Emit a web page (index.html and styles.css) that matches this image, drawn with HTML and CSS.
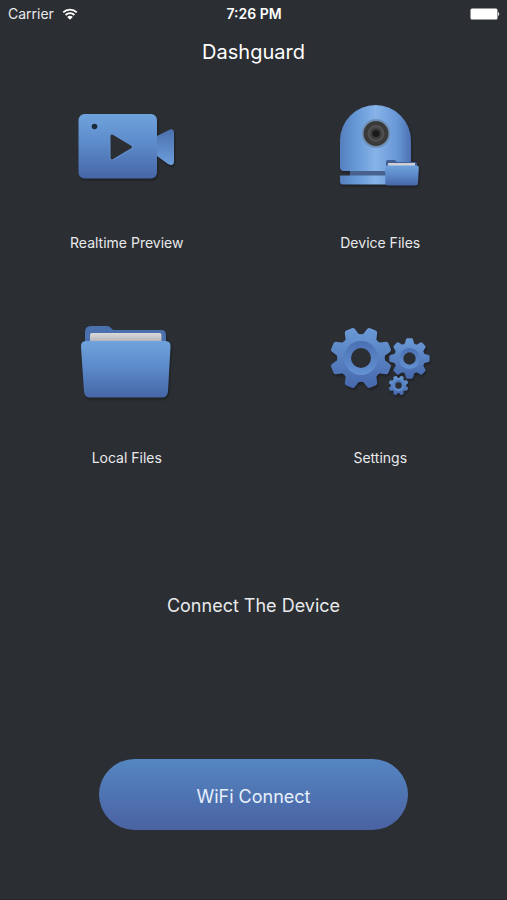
FILE: index.html
```html
<!DOCTYPE html>
<html lang="en">
<head>
    <meta charset="UTF-8">
    <meta name="viewport" content="width=device-width, initial-scale=1.0">
    <title>Dashguard</title>
    <link rel="stylesheet" href="styles.css">
</head>
<body>
    <!-- Status bar -->
    <div class="status-bar">
        <div class="carrier">
            <span>Carrier</span>
            <svg class="wifi" viewBox="0 0 16 12" aria-hidden="true">
                <path d="M1.2 4.4a9.7 9.7 0 0 1 13.6 0M3.6 7a6.3 6.3 0 0 1 8.8 0" fill="none" stroke="#fff" stroke-width="1.8"/>
                <path d="M8 11.8 5.2 9a4 4 0 0 1 5.6 0z" fill="#fff"/>
            </svg>
        </div>
        <div class="time">7:26 PM</div>
        <svg class="battery" viewBox="0 0 30 12" aria-hidden="true">
            <rect x="0.5" y="0.5" width="27" height="11" rx="1.5" fill="#fff"/>
            <path d="M28.2 4a2.4 2.4 0 0 1 0 4z" fill="#fff"/>
        </svg>
    </div>

    <h1 class="title">Dashguard</h1>

    <!-- Main menu -->
    <nav class="menu">
        <a class="menu-item" href="#preview">
            <svg class="icon" viewBox="0 0 110 100" aria-hidden="true">
                <defs>
                    <linearGradient id="blue" x1="0" y1="0" x2="0" y2="1">
                        <stop offset="0" stop-color="#6fa3dc"/>
                        <stop offset="0.45" stop-color="#5d8bcb"/>
                        <stop offset="1" stop-color="#4666a6"/>
                    </linearGradient>
                    <linearGradient id="lensBlue" x1="0" y1="0" x2="0" y2="1">
                        <stop offset="0" stop-color="#4c70ae"/>
                        <stop offset="1" stop-color="#6b9edb"/>
                    </linearGradient>
                </defs>
                <path d="M85 40 96 34.5Q102 31 102 37V65Q102 71 96 68L85 60z" fill="url(#lensBlue)"/>
                <rect x="6.5" y="18" width="78.5" height="64.5" rx="6" fill="url(#blue)"/>
                <circle cx="22.5" cy="30.5" r="2.8" fill="#1f2a38"/>
                <path d="M40 40V62L58.500 51z" fill="none" stroke="#6592d3" stroke-width="5" stroke-linejoin="round"/>
                <path d="M40 40V62L58.500 51z" fill="#2b2e33" stroke="#2b2e33" stroke-width="3" stroke-linejoin="round"/>
            </svg>
            <span>Realtime Preview</span>
        </a>
        <a class="menu-item" href="#device-files">
            <svg class="icon" viewBox="0 0 110 100" aria-hidden="true">
                <defs>
                    <linearGradient id="dome" x1="0" y1="0" x2="1" y2="0">
                        <stop offset="0" stop-color="#557fbe"/>
                        <stop offset="0.2" stop-color="#6496d4"/>
                        <stop offset="0.5" stop-color="#86b3e8"/>
                        <stop offset="0.8" stop-color="#6998d7"/>
                        <stop offset="1" stop-color="#4d72b3"/>
                    </linearGradient>
                </defs>
                <rect x="25" y="73" width="50" height="7" fill="#48628d"/>
                <path d="M15 44.5a35.5 35.5 0 0 1 71 0V71Q86 75 82 75H19Q15 75 15 71z" fill="url(#dome)"/>
                <path d="M15 79.5H86V88.5H18Q15 88.5 15 85.5z" fill="url(#dome)"/>
                <circle cx="51" cy="37.5" r="14.5" fill="#6f8fb5"/>
                <circle cx="51" cy="37.5" r="12.5" fill="#3b3a3b"/>
                <circle cx="51" cy="37.5" r="8.5" fill="#504e4e"/>
                <circle cx="51" cy="37.5" r="6" fill="#3c3b3b"/>
                <circle cx="51" cy="37.5" r="3.5" fill="#19191b"/>
                <path d="M61 68V66Q61 64 63 64H70L72 66H90Q92 66 92 68V76H61z" fill="#405f94"/>
                <path d="M63 67H90V74H63z" fill="#d0cfd6"/>
                <path d="M62 69.5H92Q94 69.5 93.8 72L93 87Q93 89.5 90.5 89.5H63Q60.5 89.5 60.4 87L60 72Q60 69.5 62 69.5z" fill="url(#blue)"/>
            </svg>
            <span>Device Files</span>
        </a>
        <a class="menu-item" href="#local-files">
            <svg class="icon" viewBox="0 0 110 100" aria-hidden="true">
                <defs>
                    <linearGradient id="paper" x1="0" y1="0" x2="0" y2="1">
                        <stop offset="0" stop-color="#dcdadb"/>
                        <stop offset="0.7" stop-color="#aeaeb4"/>
                    </linearGradient>
                </defs>
                <path d="M13 40V21Q13 15 19 15H35Q38 15 39.5 17.5Q40.5 19 43 19H89Q94 19 94 24V40z" fill="#4a70ae"/>
                <rect x="18" y="22" width="71.5" height="14" rx="2" fill="url(#paper)"/>
                <path d="M14 30H93.5Q99 30 98.5 36L96 80.5Q95.5 86.500 90 86.500H18Q12.5 86.500 12 80.5L9 36Q8.5 30 14 30z" fill="url(#blue)"/>
            </svg>
            <span>Local Files</span>
        </a>
        <a class="menu-item" href="#settings">
            <svg class="icon" viewBox="0 0 110 100" aria-hidden="true">
                <defs>
                    <linearGradient id="gearBlue" gradientUnits="userSpaceOnUse" x1="0" y1="-30" x2="0" y2="30">
                        <stop offset="0" stop-color="#6a9ad7"/>
                        <stop offset="1" stop-color="#4668ac"/>
                    </linearGradient>
                    <linearGradient id="gearTilted" href="#gearBlue" gradientTransform="rotate(-22.5)"/>
                    <linearGradient id="gearRing" x1="0" y1="0" x2="0" y2="1">
                        <stop offset="0" stop-color="#4a70b2"/>
                        <stop offset="1" stop-color="#6492d3"/>
                    </linearGradient>
                    <path id="gear" stroke-width="5" stroke-linejoin="round" d="M-5-21.5-3-28.5H3L5-21.5Q7.9-19.1 11.7-18.7L18-22.3 22.3-18 18.7-11.7Q19.1-7.9 21.5-5L28.5-3V3L21.5 5Q19.1 7.9 18.7 11.7L22.3 18 18 22.3 11.7 18.7Q7.9 19.1 5 21.5L3 28.5H-3L-5 21.5Q-7.9 19.1-11.7 18.7L-18 22.3-22.3 18-18.7 11.7Q-19.1 7.9-21.5 5L-28.5 3V-3L-21.5-5Q-19.1-7.9-18.7-11.7L-22.3-18-18-22.3-11.7-18.7Q-7.9-19.1-5-21.5z"/>
                    <g id="hub">
                        <circle r="17" fill="url(#gearRing)"/>
                        <circle r="10" fill="#2b2e33"/>
                    </g>
                </defs>
                <g transform="translate(36 47)">
                    <use href="#gear" transform="rotate(22.5)" fill="url(#gearTilted)" stroke="url(#gearTilted)"/>
                    <use href="#hub"/>
                </g>
                <g transform="translate(84.5 47.5) scale(0.65)">
                    <use href="#gear" fill="url(#gearBlue)" stroke="url(#gearBlue)"/>
                    <use href="#hub" transform="scale(0.95)"/>
                </g>
                <g transform="translate(73.5 74.5) scale(0.32)">
                    <use href="#gear" transform="rotate(22.5)" fill="url(#gearTilted)" stroke="url(#gearTilted)"/>
                    <use href="#hub"/>
                </g>
            </svg>
            <span>Settings</span>
        </a>
    </nav>

    <!-- Connection -->
    <div class="connect">
        <p class="connect-text">Connect The Device</p>
        <button type="button" class="connect-btn">WiFi Connect</button>
    </div>
</body>
</html>
```
FILE: styles.css
```css
/* Reset styles */
* {
    margin: 0;
    padding: 0;
    box-sizing: border-box;
    font-family: Inter, "Liberation Sans", sans-serif;
}

body {
    min-height: 100vh;
    background-color: #2b2e33;
    border-bottom: 1px solid #2c2430;
    color: #e9eaeb;
}

/* Status bar */
.status-bar {
    display: grid;
    grid-template-columns: 1fr auto 1fr;
    align-items: center;
    height: 27px;
    padding: 0 7px 0 8px;
    font-size: 14px;
}

.carrier {
    display: flex;
    align-items: center;
    gap: 8px;
}

.wifi {
    width: 16px;
    height: 12px;
}

.time {
    font-weight: 600;
    color: #ffffff;
}

.battery {
    width: 30px;
    height: 12px;
    justify-self: end;
}

.title {
    margin-top: 13px;
    font-size: 20px;
    font-weight: 400;
    line-height: 24px;
    text-align: center;
    color: #ffffff;
}

/* Main menu */
.menu {
    display: grid;
    grid-template-columns: 1fr 1fr;
    row-gap: 58px;
    margin-top: 32px;
}

.menu-item {
    display: flex;
    flex-direction: column;
    align-items: center;
    gap: 37px;
    font-size: 14px;
    line-height: 20px;
    color: #e9eaeb;
    text-decoration: none;
}

.icon {
    width: 110px;
    height: 100px;
    filter: drop-shadow(1px 2px 1px rgba(0, 0, 0, 0.3));
}

/* Connection */
.connect {
    display: flex;
    flex-direction: column;
    align-items: center;
    margin-top: 126px;
}

.connect-text {
    font-size: 18px;
    line-height: 24px;
}

.connect-btn {
    width: 61%;
    height: 71px;
    margin-top: 141px;
    padding-top: 4px;
    border: none;
    border-radius: 36px;
    background: linear-gradient(#5586c2, #4a62a2);
    color: #e6f0fc;
    font-size: 18px;
    cursor: pointer;
}
```
